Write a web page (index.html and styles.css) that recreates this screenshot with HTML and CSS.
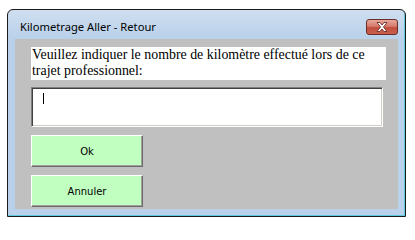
FILE: index.html
```html
<!DOCTYPE html>
<html lang="fr">
<head>
<meta charset="utf-8">
<title>Kilometrage Aller - Retour</title>
<link rel="stylesheet" href="styles.css">
</head>
<body>
<div class="window">
  <div class="titlebar">
    <span class="title">Kilometrage Aller - Retour</span>
    <span class="close" aria-label="Fermer">
      <svg width="18" height="12" viewBox="0 0 18 12">
        <path d="M4 1.5 L7 1.5 L9 4 L11 1.5 L14 1.5 L10.5 6 L14 10.5 L11 10.5 L9 8 L7 10.5 L4 10.5 L7.5 6 Z" fill="#ffffff" stroke="#7a3a32" stroke-width="1" stroke-linejoin="round"/>
      </svg>
    </span>
  </div>
  <div class="client">
    <div class="label">Veuillez indiquer le nombre de kilomètre effectué lors de ce trajet professionnel:</div>
    <div class="textbox"><span class="caret"></span></div>
    <button class="btn">Ok</button>
    <button class="btn">Annuler</button>
  </div>
</div>
</body>
</html>
```
FILE: styles.css
```css
html, body {
  margin: 0;
  padding: 0;
  background: #ffffff;
}
body {
  padding: 9px 0 0 7px;
}
.window {
  box-sizing: border-box;
  width: 399px;
  height: 208px;
  border: 1px solid #1b1b1b;
  border-radius: 6px 6px 0 0;
  background: linear-gradient(180deg, #cfdff0 0px, #b9d1ea 28px, #b9d1ea 100%);
  box-shadow: inset -1px -1px 0 #5ec9de;
  display: flex;
  flex-direction: column;
}
.titlebar {
  box-sizing: border-box;
  height: 29px;
  display: flex;
  align-items: flex-start;
  justify-content: space-between;
  padding: 9px 7px 0 12px;
}
.title {
  font-family: "Noto Sans", "DejaVu Sans", sans-serif;
  font-size: 11.2px;
  line-height: 16px;
  color: #000;
}
.close {
  box-sizing: border-box;
  width: 32px;
  height: 16px;
  border: 1px solid #6b2e26;
  border-radius: 3px;
  background: linear-gradient(180deg, #e8a89c 0%, #d67a6c 45%, #c24c3c 55%, #c9604f 100%);
  display: flex;
  align-items: center;
  justify-content: center;
}
.close svg {
  display: block;
}
.client {
  box-sizing: border-box;
  margin: 0 7px;
  height: 170px;
  background: #c0c0c0;
  padding: 8px 0 0 16px;
  display: flex;
  flex-direction: column;
  align-items: flex-start;
}
.label {
  box-sizing: border-box;
  width: 355px;
  height: 33px;
  background: #ffffff;
  font-family: "Liberation Serif", "Times New Roman", serif;
  font-size: 13.9px;
  line-height: 16px;
  color: #000;
  padding: 0 0 0 1px;
}
.textbox {
  box-sizing: border-box;
  margin-top: 7px;
  width: 352px;
  height: 40px;
  background: #ffffff;
  border-top: 1px solid #808080;
  border-left: 1px solid #808080;
  border-right: 1px solid #ffffff;
  border-bottom: 1px solid #ffffff;
  box-shadow: inset 1px 1px 0 #404040, inset -1px -1px 0 #d4d0c8;
  padding: 5px 0 0 11px;
}
.caret {
  display: block;
  width: 1px;
  height: 11px;
  background: #000;
}
.btn {
  box-sizing: border-box;
  width: 112px;
  height: 32px;
  margin: 8px 0 0 0;
  padding: 0;
  background: #c0ffc0;
  border-top: 1px solid #ffffff;
  border-left: 1px solid #ffffff;
  border-right: 1px solid #696969;
  border-bottom: 1px solid #696969;
  box-shadow: inset -1px -1px 0 #a0a0a0;
  font-family: "DejaVu Sans", "Liberation Sans", sans-serif;
  font-size: 10px;
  color: #000;
}
```
